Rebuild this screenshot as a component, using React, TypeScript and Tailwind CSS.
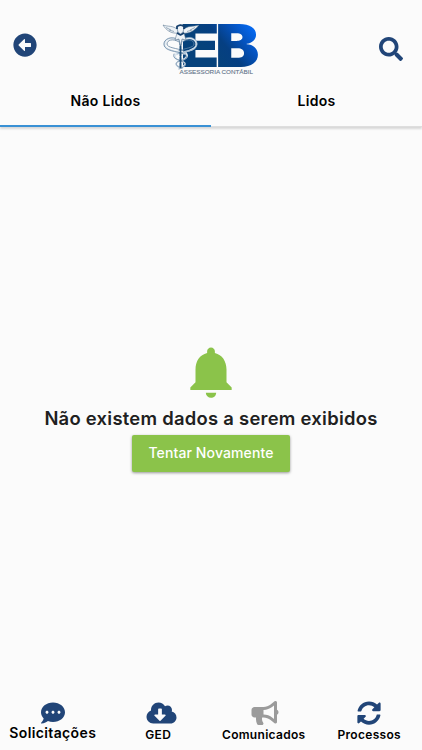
import {
  FaArrowAltCircleLeft,
  FaBullhorn,
  FaCloudDownloadAlt,
  FaCommentDots,
  FaSearch,
  FaSyncAlt,
} from "react-icons/fa";
import { MdNotifications } from "react-icons/md";

function Logo() {
  return (
    <svg
      viewBox="0 0 98 54"
      className="h-[54px] w-[98px] overflow-visible"
      role="img"
      aria-label="EB Assessoria Contábil"
    >
      <defs>
        <linearGradient id="brand" gradientUnits="userSpaceOnUse" x1="55" y1="40" x2="94" y2="8">
          <stop offset="0" stopColor="#06427b" />
          <stop offset="0.35" stopColor="#053f82" />
          <stop offset="0.65" stopColor="#0450b8" />
          <stop offset="1" stopColor="#0569f2" />
        </linearGradient>
      </defs>
      <g
        fill="url(#brand)"
        fontFamily="Inter, sans-serif"
        fontWeight="900"
        fontSize="59"
      >
        <text x="17.5" y="44" textLength="40" lengthAdjust="spacingAndGlyphs">E</text>
        <text x="53" y="44" textLength="44.5" lengthAdjust="spacingAndGlyphs">B</text>
      </g>

      {/* caduceus */}
      <g fill="none" strokeLinecap="round" strokeLinejoin="round">
        <path stroke="#fbfbfb" strokeWidth="4" d="M19 8V46" />
        <g stroke="#dce7f0" strokeWidth="1.8">
          <path d="M20 18C28 12 36 17 34 23C32 28 24 28 15 31" />
          <path d="M17 18C9 12 1 17 3 23C5 28 14 28 23 31" />
          <path d="M14 31C11 35 15 37 19 38C25 40 24 43 17 45M24 30C28 35 20 37 16 39C12 41 15 44 20 45" />
        </g>
        <g stroke="#66839f" strokeWidth="0.8">
          <path d="M17 17C10 12 1 16 2 22C3 28 14 28 22 31C28 34 23 37 17 38C12 40 14 44 20 45" />
          <path d="M17 19C11 15 5 17 5 21C5 25 15 25 22 28" />
          <path d="M12 31C10 36 16 36 21 39C25 41 23 44 17 46" />
        </g>
        <g stroke="#7f9db8" strokeWidth="0.6">
          <path d="M20 17C28 11 36 16 35 22C34 28 24 28 15 31M20 19C26 15 32 17 32 21C32 25 23 25 16 28" />
        </g>
        <path stroke="#174a78" strokeWidth="2" d="M18.5 18V45" strokeDasharray="4 1.5" />
      </g>
      <g fill="#eef3f7" stroke="#526f8b" strokeWidth="0.55" strokeLinejoin="round">
        <path d="M16 10C9 11 4 7 1 2C6 4 11 2 16 7ZM21 10C28 11 33 7 37 2C31 4 26 2 21 7Z" />
        <path d="M4 4.5L9 7M7 7L12 8.5M33 4.5L28 7M30 7L25 8.5" fill="none" />
        <path d="M15 10L13 17L17 16L18.5 23L20 16L24 17L22 10Z" />
        <path d="M15 5C15 1 22 1 22 5L21 9L18.5 11L16 9Z" />
        <path d="M15 6V3.5C17 2 20 2 22 3.5V6" fill="none" stroke="#153f6c" strokeWidth="1.8" />
        <path d="M15 10L18.5 12L22 10" fill="none" stroke="#153f6c" strokeWidth="1.5" />
      </g>
      <text
        x="17.5"
        y="51.2"
        fill="#65758b"
        stroke="#65758b"
        strokeWidth="0.1"
        fontFamily="Liberation Sans, Arial, sans-serif"
        fontSize="5.6"
        textLength="73.5"
        lengthAdjust="spacingAndGlyphs"
      >
        ASSESSORIA CONTÁBIL
      </text>
    </svg>
  );
}

function Header() {
  return (
    <header className="flex h-[78px] items-start justify-between pl-[13px] pr-[19px]">
      <button type="button" aria-label="Voltar" className="mt-[33px] text-[#214578]">
        <FaArrowAltCircleLeft size={24} />
      </button>
      <div className="ml-[5px] mt-[23px]">
        <Logo />
      </div>
      <button type="button" aria-label="Pesquisar" className="mt-[37px] text-[#214578]">
        <FaSearch size={24} />
      </button>
    </header>
  );
}

function Tabs() {
  return (
    <nav className="grid h-[49px] grid-cols-2 text-sm font-semibold tracking-[0.3px] text-black shadow-[0_2px_2px_rgba(0,0,0,0.14)]">
      <button type="button" className="border-b-2 border-[#3991d5] pb-[2px]">
        Não Lidos
      </button>
      <button type="button" className="border-b border-[#dedede] pb-[3px]">
        Lidos
      </button>
    </nav>
  );
}

const navItems = [
  { label: "Solicitações", Icon: FaCommentDots, icon: "h-6 w-6 text-[#214578]", text: "text-[14px] tracking-[0.37px] -mt-[2px]" },
  { label: "GED", Icon: FaCloudDownloadAlt, icon: "ml-[6px] h-6 w-[31px] text-[#214578]", text: "text-[12px] tracking-[0.3px]" },
  { label: "Comunicados", Icon: FaBullhorn, icon: "ml-[2px] h-6 w-[28px] text-[#9b9b9b]", text: "text-[12px] tracking-[0.3px]" },
  { label: "Processos", Icon: FaSyncAlt, icon: "h-6 w-6 text-[#214578]", text: "text-[12px] tracking-[0.3px]" },
];

export default function App() {
  return (
    <div className="flex h-[750px] w-[422px] flex-col overflow-hidden bg-[#fbfbfb] font-['Inter',sans-serif] text-[#111]">
      <Header />
      <Tabs />

      <main className="flex flex-1 flex-col items-center pt-[214px]">
        <MdNotifications size={62} className="text-[#8bc34a]" />
        <h1 className="mt-px whitespace-nowrap text-[18.4px] font-semibold leading-7 tracking-[0.27px] text-[#202020]">
          Não existem dados a serem exibidos
        </h1>
        <button
          type="button"
          className="mt-[3px] h-[37px] w-[158px] rounded-[2px] bg-[#8bc34a] pb-[2px] text-sm font-medium tracking-[0.12px] text-white shadow-[0_1px_3px_rgba(0,0,0,0.4)]"
        >
          Tentar Novamente
        </button>
      </main>

      <footer className="grid h-[52px] grid-cols-4">
        {navItems.map(({ label, Icon, icon, text }) => (
          <button key={label} type="button" className="flex flex-col items-center pt-[3px]">
            <Icon className={`shrink-0 ${icon}`} />
            <span className={`whitespace-nowrap pt-px font-semibold leading-[17px] text-black ${text}`}>
              {label}
            </span>
          </button>
        ))}
      </footer>
    </div>
  );
}
